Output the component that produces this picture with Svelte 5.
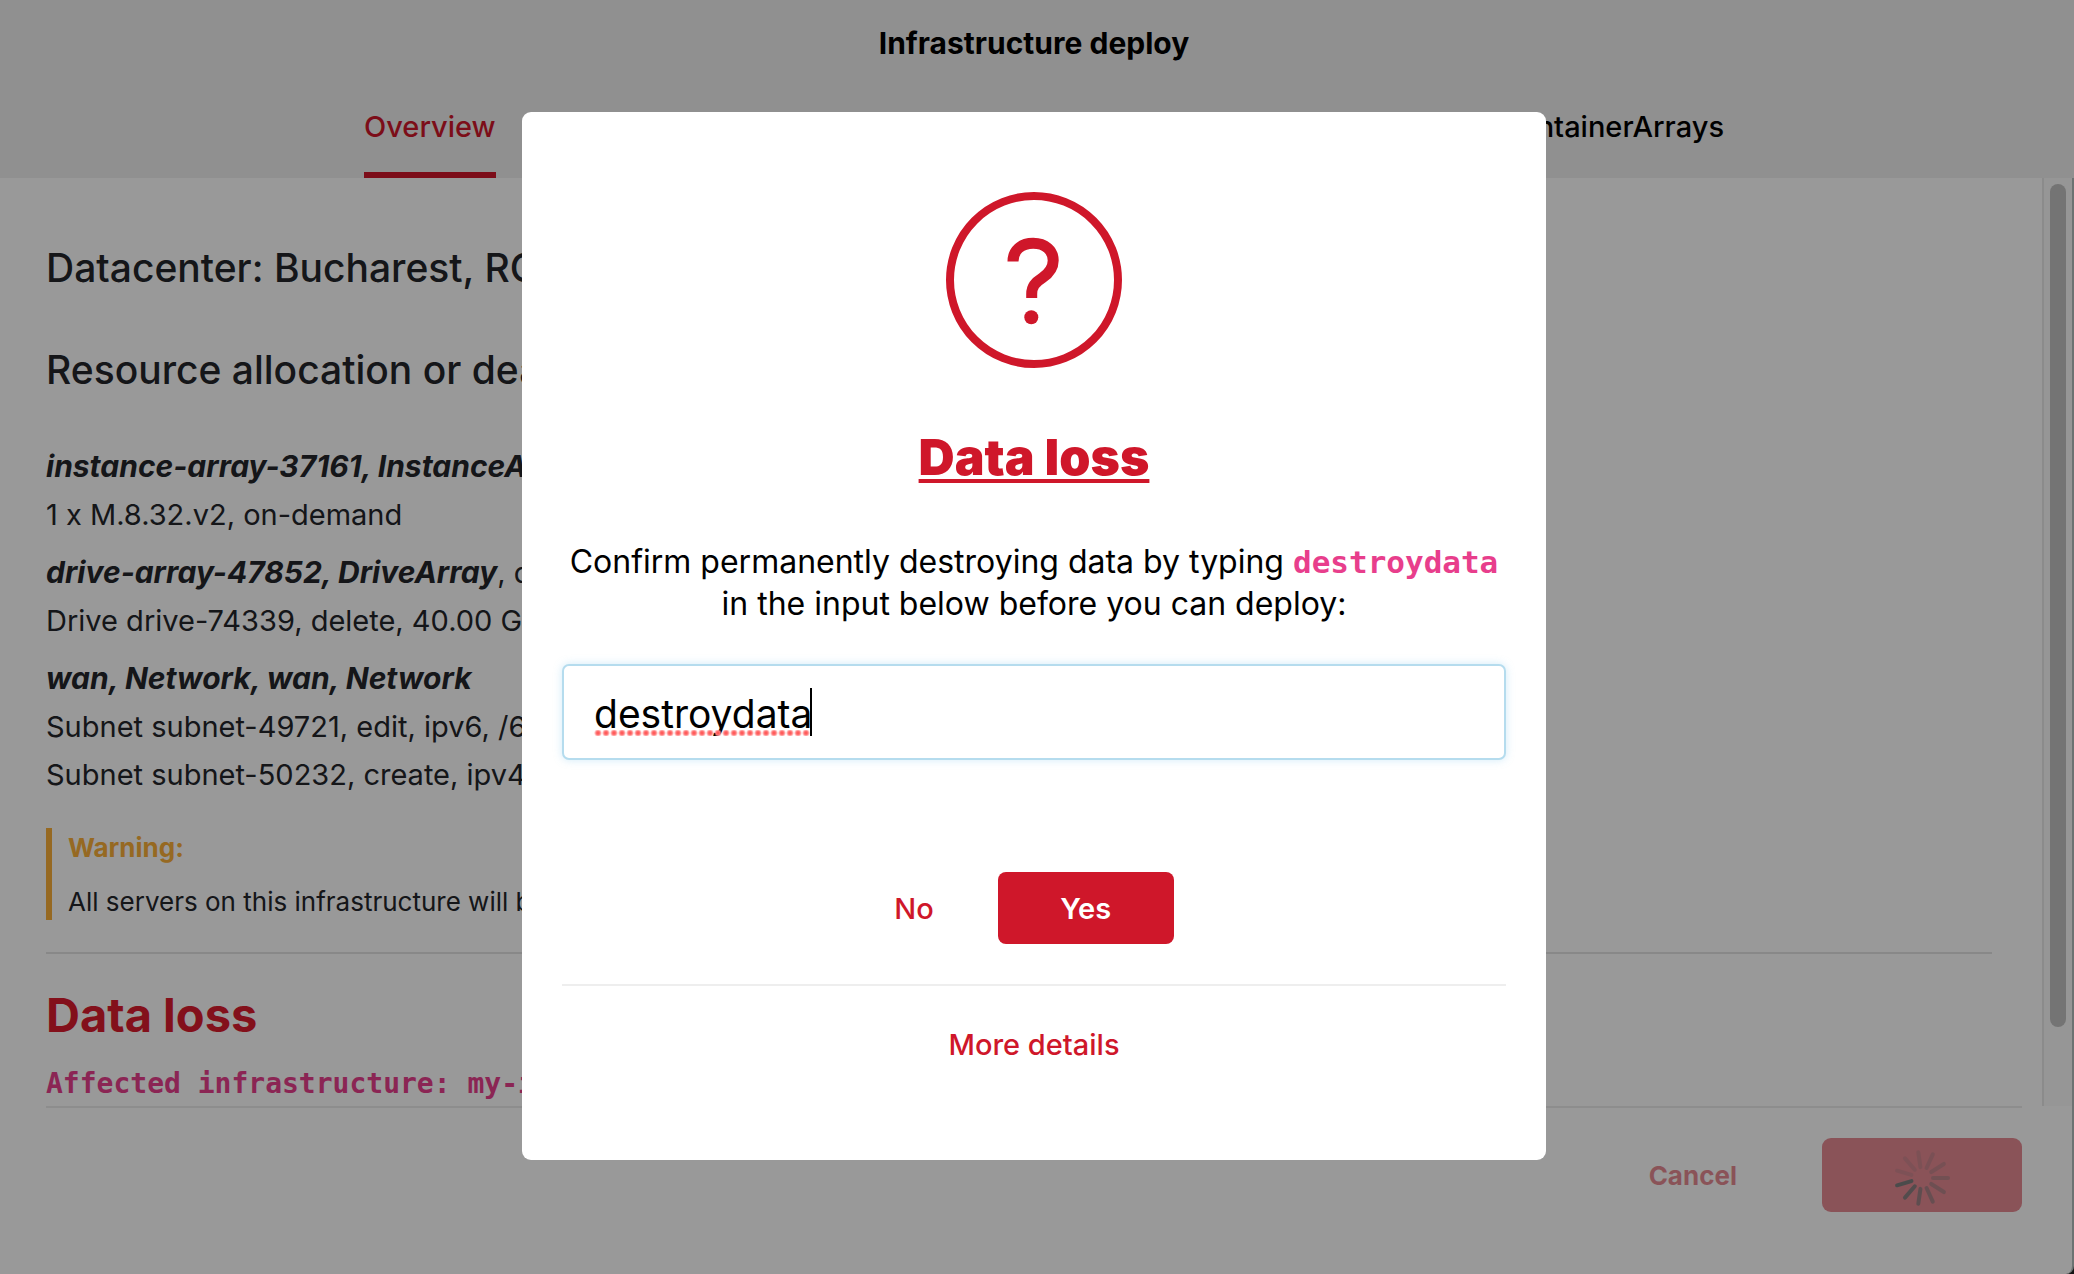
<script>
  const tabs = ['Overview', 'InstanceArrays', 'DriveArrays', 'ContainerArrays'];
  let active = $state('Overview');
  let confirmation = $state('destroydata');

  const resources = [
    { name: 'instance-array-37161, InstanceArray', action: ', edit', lines: ['1 x M.8.32.v2, on-demand'] },
    { name: 'drive-array-47852, DriveArray', action: ', delete', lines: ['Drive drive-74339, delete, 40.00 GB'] },
    {
      name: 'wan, Network, wan, Network',
      action: '',
      lines: ['Subnet subnet-49721, edit, ipv6, /64', 'Subnet subnet-50232, create, ipv4, /30']
    }
  ];

  // Spoke opacities, clockwise from three o'clock.
  const fades = [0.38, 0.45, 0.55, 0.7, 0.88, 1, 0.2, 0.2, 0.22, 0.26, 0.3];
</script>

<div class="page">
  <header>
    <h1>Infrastructure deploy</h1>
    <nav aria-label="Sections">
      {#each tabs as tab}
        <button class="tab" class:active={active === tab} onclick={() => (active = tab)}>{tab}</button>
      {/each}
    </nav>
  </header>

  <div class="window">
    <div class="scroller">
      <main>
        <h2>Datacenter: Bucharest, RO</h2>
        <h2>Resource allocation or deallocation</h2>
        <div class="resources">
          {#each resources as r}
            <section>
              <p><strong>{r.name}</strong>{r.action}</p>
              {#each r.lines as line}<p>{line}</p>{/each}
            </section>
          {/each}
        </div>
        <aside>
          <p class="warn">Warning:</p>
          <p>All servers on this infrastructure will be affected</p>
        </aside>
        <hr />
        <h3>Data loss</h3>
        <code>Affected infrastructure: my-infra</code>
      </main>
      <div class="track"><div class="thumb"></div></div>
    </div>

    <footer>
      <div class="actions">
        <button class="cancel" disabled>Cancel</button>
        <button class="deploy" disabled aria-label="Deploying">
          <svg viewBox="-30 -30 60 60" width="60" height="60" aria-hidden="true">
            {#each fades as fade, i}
              <line x1="11" x2="26" y1="0" y2="0" opacity={fade} transform="rotate({(i * 360) / 11})" />
            {/each}
          </svg>
        </button>
      </div>
    </footer>
  </div>
</div>

<div class="overlay">
  <div class="dialog" role="dialog" aria-modal="true" aria-labelledby="dialog-title">
    <svg class="question" viewBox="0 0 176 176" aria-hidden="true">
      <circle cx="88" cy="88" r="84" stroke-width="8" />
      <path
        d="M67 69.5C67 58.5 75 51.3 87.2 51.3C99.2 51.3 107.2 58.5 107.2 68.5C107.2 76 103.5 81 96.5 85.7C89 90.5 85.7 94.5 85.7 102V106"
        stroke-width="11"
      />
      <circle class="dot" cx="85.3" cy="125.3" r="7" />
    </svg>
    <h2 class="title" id="dialog-title">Data loss</h2>
    <label for="confirmation">
      Confirm permanently destroying data by typing <code>destroydata</code><br />
      in the input below before you can deploy:
    </label>
    <div class="field">
      <input id="confirmation" type="text" autocomplete="off" spellcheck="false" bind:value={confirmation} />
      <span class="spelling" aria-hidden="true"></span>
    </div>
    <div class="choices">
      <button class="link">No</button>
      <button class="yes">Yes</button>
    </div>
    <hr />
    <button class="link">More details</button>
  </div>
</div>

<style>
  :global(body) {
    background: #222;
    font-family: Inter, 'Liberation Sans', sans-serif;
    font-size: 29px;
    line-height: 48px;
    color: #23262b;
  }
  * {
    box-sizing: border-box;
  }
  h1, h2, h3, p {
    margin: 0;
  }
  button {
    font: inherit;
    line-height: 40px;
    border: 0;
    padding: 0;
    background: none;
    cursor: pointer;
  }
  hr {
    width: 100%;
    margin: 0;
    border: 0;
    border-top: 2px solid #e3e3e3;
  }
  code {
    font-family: 'DejaVu Sans Mono', monospace;
    font-weight: 700;
    color: #e83e8c;
  }

  .page {
    display: flex;
    flex-direction: column;
    height: 100vh;
    min-height: 900px;
  }
  header {
    background: #f0f0f0;
    color: #000;
    padding-top: 23px;
  }
  h1 {
    font-size: 30px;
    line-height: 40px;
    font-weight: 700;
    text-align: center;
    padding-right: 6px;
  }
  nav {
    display: flex;
    justify-content: space-between;
    padding: 44px 350px 0 364px;
  }
  .tab {
    font-weight: 500;
    color: #000;
    padding-bottom: 25px;
    border-bottom: 6px solid transparent;
  }
  .tab.active {
    color: #cf172a;
    border-color: #cf172a;
  }

  .window {
    flex: 1;
    min-height: 0;
    display: flex;
    flex-direction: column;
    background: #fff;
    border-right: 2px solid #b4bfbf;
    border-bottom-right-radius: 8px;
  }
  .scroller {
    flex: 1;
    min-height: 0;
    display: flex;
    overflow: hidden;
  }
  main {
    flex: 1;
    min-width: 0;
    padding: 66px 50px 0 46px;
  }
  main h2 {
    font-size: 39px;
    font-weight: 500;
    margin-bottom: 54px;
  }
  .resources {
    display: grid;
    gap: 10px;
    margin-top: -5px;
  }
  strong {
    font-size: 30px;
    line-height: 30px;
    font-style: italic;
    font-weight: 700;
  }
  aside {
    display: grid;
    gap: 18px;
    margin: 29px 0 32px;
    padding: 2px 0 0 16px;
    border-left: 6px solid #faaf39;
    font-size: 26px;
    line-height: 36px;
  }
  .warn {
    font-weight: 700;
    color: #faaf39;
  }
  h3 {
    margin: 33px 0 21px;
    font-size: 47px;
    line-height: 56px;
    font-weight: 700;
    color: #da1b2e;
  }
  main code {
    display: block;
    font-size: 28px;
    line-height: 40px;
  }
  .track {
    width: 30px;
    padding: 6px;
    background: #fafafa;
    border-left: 2px solid #e8e8e8;
  }
  .thumb {
    width: 16px;
    height: 92%;
    border-radius: 8px;
    background: #c1c1c1;
  }

  footer {
    padding: 0 50px 62px 46px;
  }
  .actions {
    display: flex;
    justify-content: flex-end;
    align-items: center;
    gap: 85px;
    padding-top: 30px;
    border-top: 2px solid #ececec;
  }
  .cancel {
    padding-top: 2px;
    font-size: 26px;
    font-weight: 700;
    color: #cf172a;
    opacity: 0.5;
  }
  .deploy {
    display: grid;
    place-items: center;
    width: 200px;
    height: 74px;
    border-radius: 9px;
    background: #cf172a;
    opacity: 0.5;
  }
  .deploy svg {
    margin-top: 6px;
  }
  line {
    stroke: #000;
    stroke-width: 4;
    stroke-linecap: round;
  }

  .overlay {
    position: fixed;
    inset: 0;
    display: flex;
    align-items: center;
    justify-content: center;
    padding: 0 6px 2px 0;
    background: rgba(0, 0, 0, 0.4);
  }
  .dialog {
    display: flex;
    flex-direction: column;
    align-items: center;
    width: 1024px;
    max-width: 100%;
    padding: 80px 40px 95px;
    border-radius: 9px;
    background: #fff;
    color: #000;
  }
  .question {
    width: 176px;
    height: 176px;
    fill: none;
    stroke: #cf172a;
  }
  .dot {
    fill: #cf172a;
    stroke: none;
  }
  .title {
    margin: 59px 0 54px;
    font-size: 50px;
    line-height: 60px;
    font-weight: 900;
    color: #cf172a;
    text-decoration: underline;
    text-decoration-thickness: 4px;
    text-underline-offset: 4px;
    text-decoration-skip-ink: none;
  }
  label {
    font-size: 32px;
    line-height: 42px;
    text-align: center;
  }
  label code {
    font-size: 31px;
    line-height: 31px;
  }
  .field {
    position: relative;
    width: 100%;
    margin: 39px 0 112px;
  }
  input {
    display: block;
    width: 100%;
    height: 96px;
    padding: 2px 30px 0;
    border: 2px solid #b5dcee;
    border-radius: 7px;
    box-shadow: 0 0 8px rgba(120, 195, 235, 0.35);
    outline: 0;
    background: #fff;
    font: 400 39px Inter, 'Liberation Sans', sans-serif;
    color: #000;
  }
  /* Spell-check dots with the text caret at their end. */
  .spelling {
    position: absolute;
    left: 32px;
    top: 24px;
    width: 218px;
    height: 48px;
    border-right: 2px solid #000;
    background: radial-gradient(circle, #ff5c5c 1px, #ff7d7d 2px, transparent 4px) left bottom / 8px 6px repeat-x;
    pointer-events: none;
  }
  .choices {
    display: flex;
    align-items: center;
    gap: 64px;
    margin-bottom: 40px;
  }
  .choices button {
    padding-top: 2px;
  }
  .dialog hr {
    border-color: #eee;
    margin-bottom: 39px;
  }
  .link {
    font-weight: 500;
    color: #cf172a;
  }
  .yes {
    width: 176px;
    height: 72px;
    border-radius: 8px;
    background: #cf172a;
    color: #fff;
    font-weight: 600;
  }
</style>
